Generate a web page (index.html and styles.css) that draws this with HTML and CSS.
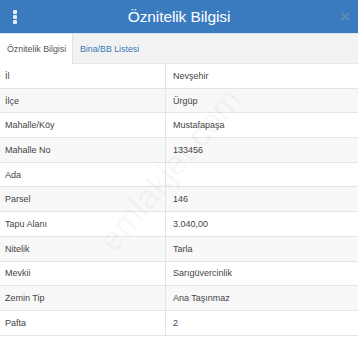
FILE: index.html
```html
<!DOCTYPE html>
<html>
<head>
<meta charset="utf-8">
<link rel="stylesheet" href="styles.css">
</head>
<body>
<div class="panel">
  <div class="header">
    <span class="dots"><i></i><i></i><i></i></span>
    <span class="title">Öznitelik Bilgisi</span>
    <span class="close">×</span>
  </div>
  <div class="tabs">
    <div class="tab active">Öznitelik Bilgisi</div>
    <div class="tab">Bina/BB Listesi</div>
  </div>
  <div class="table">
    <div class="row"><div class="k">İl</div><div class="v">Nevşehir</div></div>
    <div class="row"><div class="k">İlçe</div><div class="v">Ürgüp</div></div>
    <div class="row"><div class="k">Mahalle/Köy</div><div class="v">Mustafapaşa</div></div>
    <div class="row"><div class="k">Mahalle No</div><div class="v">133456</div></div>
    <div class="row"><div class="k">Ada</div><div class="v"></div></div>
    <div class="row"><div class="k">Parsel</div><div class="v">146</div></div>
    <div class="row"><div class="k">Tapu Alanı</div><div class="v">3.040,00</div></div>
    <div class="row"><div class="k">Nitelik</div><div class="v">Tarla</div></div>
    <div class="row"><div class="k">Mevkii</div><div class="v">Sarıgüvercinlik</div></div>
    <div class="row"><div class="k">Zemin Tip</div><div class="v">Ana Taşınmaz</div></div>
    <div class="row"><div class="k">Pafta</div><div class="v">2</div></div>
  </div>
  <div class="watermark">emlakjet.com</div>
</div>
</body>
</html>
```
FILE: styles.css
```css
html, body {
  margin: 0;
  padding: 0;
  background: #fff;
}
body {
  font-family: "Liberation Sans", Arial, sans-serif;
  color: #444;
  width: 358px;
  height: 338px;
  overflow: hidden;
}
.panel {
  position: relative;
  width: 358px;
  height: 338px;
  overflow: hidden;
}
.header {
  height: 33px;
  background: #3a7bbf;
  border-bottom: 1px solid #d6e4f2;
  display: flex;
  align-items: center;
  justify-content: center;
  position: relative;
}
.title {
  color: #fff;
  font-size: 15.5px;
  letter-spacing: -0.1px;
}
.dots {
  position: absolute;
  left: 13px;
  top: 10px;
  display: flex;
  flex-direction: column;
  gap: 1.5px;
}
.dots i {
  display: block;
  width: 3.5px;
  height: 3.5px;
  background: #e3edf7;
  border-radius: 1px;
}
.close {
  position: absolute;
  right: 8px;
  top: 8px;
  color: #5e8ab8;
  font-size: 17px;
  line-height: 17px;
  font-weight: bold;
}
.tabs {
  height: 30px;
  background: #f2f2f2;
  display: flex;
  border-bottom: 1px solid #e6e6e6;
  box-sizing: border-box;
}
.tab {
  font-size: 8.8px;
  padding: 0 7px;
  display: flex;
  align-items: center;
  color: #3a78b8;
  white-space: nowrap;
}
.tab.active {
  background: #fff;
  color: #555;
  width: 73px;
  box-sizing: border-box;
  border-right: 1px solid #e2e2e2;
  margin-bottom: -1px;
}
.table {
  display: flex;
  flex-direction: column;
}
.row {
  display: grid;
  grid-template-columns: 166px 1fr;
  height: 24.7px;
  box-sizing: border-box;
  border-bottom: 1px solid #e4e4e4;
  font-size: 9px;
}
.row:nth-child(even) {
  background: #f8f8f8;
}
.k, .v {
  display: flex;
  align-items: center;
  padding-left: 5px;
}
.k {
  border-right: 1px solid #e4e4e4;
}
.v {
  padding-left: 7px;
}
.watermark {
  position: absolute;
  left: 70px;
  top: 150px;
  font-size: 34px;
  color: rgba(0, 0, 0, 0.045);
  transform: rotate(-50deg);
  transform-origin: center;
  white-space: nowrap;
  pointer-events: none;
}
```
